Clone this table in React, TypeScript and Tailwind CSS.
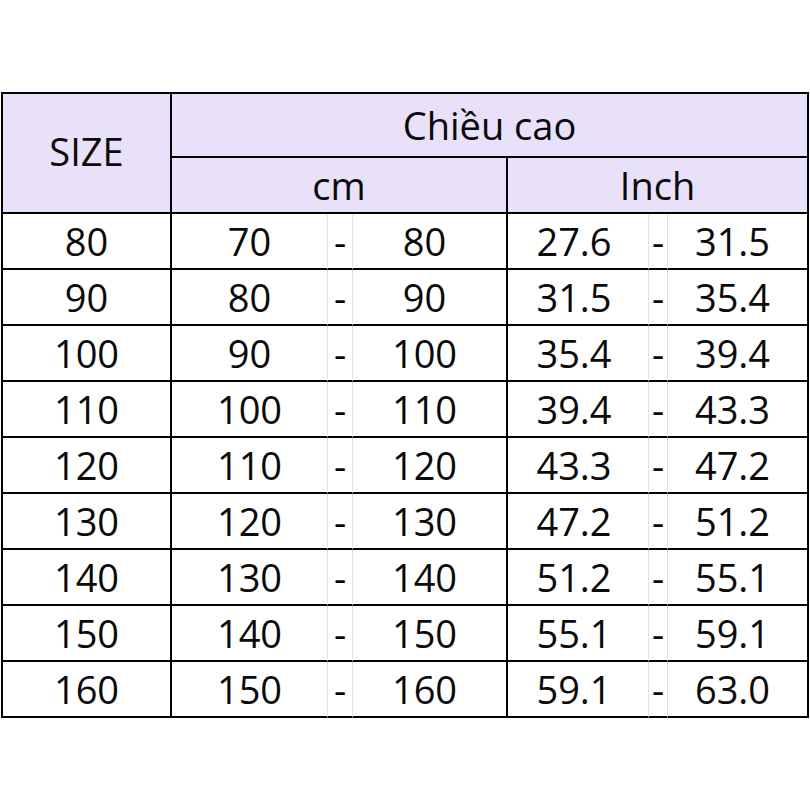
import React from 'react';

const rows: [string, string, string, string, string][] = [
  ['80', '70', '80', '27.6', '31.5'],
  ['90', '80', '90', '31.5', '35.4'],
  ['100', '90', '100', '35.4', '39.4'],
  ['110', '100', '110', '39.4', '43.3'],
  ['120', '110', '120', '43.3', '47.2'],
  ['130', '120', '130', '47.2', '51.2'],
  ['140', '130', '140', '51.2', '55.1'],
  ['150', '140', '150', '55.1', '59.1'],
  ['160', '150', '160', '59.1', '63.0'],
];

// thick black cell edge vs the faint spreadsheet gridline
const major = 'border-r-2 border-b-2 border-black';
const minor = 'border-r border-r-[#e2e2e2] border-b-2 border-b-black';
const cell = 'flex items-center justify-center';

export default function App() {
  return (
    <div
      className="w-[810px] h-[810px] bg-white text-[#0a0a0a] pt-[92px] pl-[1px]"
      style={{ fontFamily: '"Open Sans", "Noto Sans", sans-serif' }}
    >
      <div className="grid w-[808px] grid-cols-[169px_156px_25px_155px_141px_19px_141px] grid-rows-[64px_56px_repeat(9,56px)] border-l-2 border-t-2 border-black text-[38px] leading-none">
        {/* header */}
        <div className={`${cell} ${major} row-span-2 bg-[#e9e1f9] pb-[4px]`}>SIZE</div>
        <div className={`${cell} ${major} col-span-6 bg-[#e9e1f9]`}>Chiều cao</div>
        <div className={`${cell} ${major} col-span-3 bg-[#e9e1f9]`}>cm</div>
        <div className={`${cell} ${major} col-span-3 bg-[#e9e1f9]`}>Inch</div>

        {rows.map((r) => (
          <React.Fragment key={r[0]}>
            <div className={`${cell} ${major}`}>{r[0]}</div>
            <div className={`${cell} ${minor}`}>{r[1]}</div>
            <div className={`${cell} ${minor}`}>-</div>
            <div className={`${cell} ${major} pr-[10px]`}>{r[2]}</div>
            <div className={`${cell} ${minor} pr-[8px]`}>{r[3]}</div>
            <div className={`${cell} ${minor}`}>-</div>
            <div className={`${cell} ${major} pr-[10px]`}>{r[4]}</div>
          </React.Fragment>
        ))}
      </div>
    </div>
  );
}
